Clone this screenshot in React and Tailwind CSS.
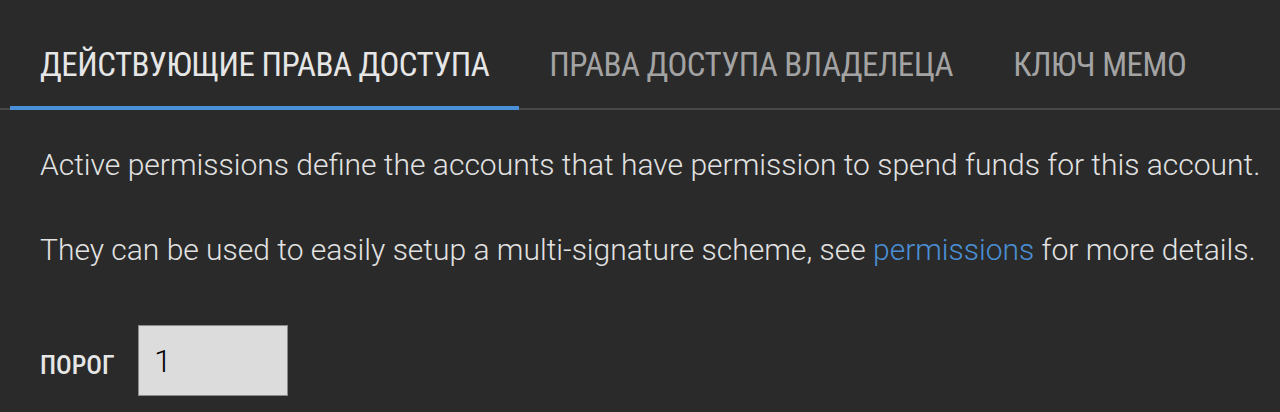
export default function App() {
  const tabs = ['ДЕЙСТВУЮЩИЕ ПРАВА ДОСТУПА', 'ПРАВА ДОСТУПА ВЛАДЕЛЕЦА', 'КЛЮЧ МЕМО'];
  const active = 0;

  return (
    <div className="w-[1280px] h-[412px] bg-[#2a2a2a] overflow-hidden">
      {/* Tabs */}
      <div className="pt-[43px] pl-[10px] border-b-2 border-[#474747] flex">
        {tabs.map((tab, i) => (
          <div
            key={tab}
            className={`px-[30px] h-[67px] shrink-0 whitespace-nowrap flex items-start pt-[4px] border-b-4 -mb-[2px] text-[33px] tracking-[-0.5px] leading-[36px] font-[Roboto_Condensed,'Liberation_Sans_Narrow',sans-serif] ${
              i === active ? 'border-[#4a90d9] text-[#e6e6e6]' : 'border-transparent text-[#a3a3a3]'
            }`}
            style={{ fontStretch: 'condensed' }}
          >
            {tab}
          </div>
        ))}
      </div>

      {/* Content */}
      <div className="pl-[40px] pt-[35px] font-['Roboto',sans-serif] font-light text-[30px] text-[#e2e2e2] whitespace-nowrap">
        <p className="leading-[40px]">
          Active permissions define the accounts that have permission to spend funds for this account.
        </p>
        <p className="leading-[40px] mt-[45px]">
          They can be used to easily setup a multi-signature scheme, see{' '}
          <a href="#" className="text-[#4a8fd6]">permissions</a> for more details.
        </p>

        <div className="flex items-center mt-[55px]">
          <span
            className="text-[26px] font-medium mt-[10px] text-[#e6e6e6] w-[98px] font-[Roboto_Condensed,'Liberation_Sans_Narrow',sans-serif]"
            style={{ fontStretch: 'condensed' }}
          >
            ПОРОГ
          </span>
          <input
            type="text"
            defaultValue="1"
            className="w-[150px] h-[71px] bg-[#dcdcdc] border border-[#8a8a8a] px-[15px] text-[32px] text-black font-['Roboto',sans-serif] outline-none"
          />
        </div>
      </div>
    </div>
  );
}
